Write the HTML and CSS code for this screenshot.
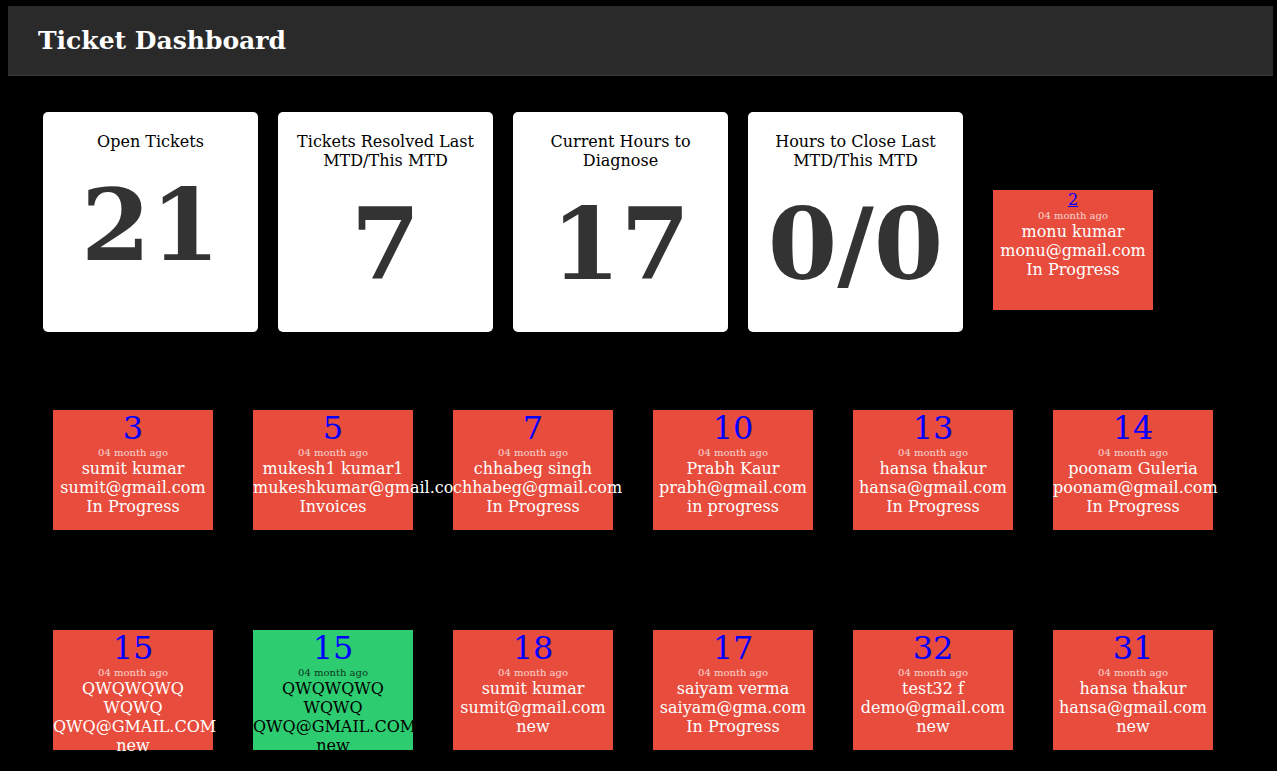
FILE: index.html
```html
<!DOCTYPE html>
<html>
<head>
<meta charset="utf-8">
<title>Ticket Dashboard</title>
<link rel="stylesheet" href="styles.css">
</head>
<body>
<header class="topbar"><h1 class="title">Ticket Dashboard</h1></header>
<main class="main">
  <div class="row row-first">
    <div class="stat"><div class="stat-title">Open Tickets</div><div class="stat-num">21</div></div>
    <div class="stat"><div class="stat-title">Tickets Resolved Last MTD/This MTD</div><div class="stat-num">7</div></div>
    <div class="stat"><div class="stat-title">Current Hours to Diagnose</div><div class="stat-num">17</div></div>
    <div class="stat"><div class="stat-title">Hours to Close Last MTD/This MTD</div><div class="stat-num">0/0</div></div>
    <div class="ticket red first-ticket"><a class="tnum small-link" href="#">2</a><div class="ago">04 month ago</div><div class="line">monu kumar</div><div class="line">monu@gmail.com</div><div class="line">In Progress</div></div>
  </div>
  <div class="row row-second">
    <div class="ticket red"><a class="tnum" href="#">3</a><div class="ago">04 month ago</div><div class="line">sumit kumar</div><div class="line">sumit@gmail.com</div><div class="line">In Progress</div></div>
    <div class="ticket red"><a class="tnum" href="#">5</a><div class="ago">04 month ago</div><div class="line">mukesh1 kumar1</div><div class="line">mukeshkumar@gmail.com</div><div class="line">Invoices</div></div>
    <div class="ticket red"><a class="tnum" href="#">7</a><div class="ago">04 month ago</div><div class="line">chhabeg singh</div><div class="line">chhabeg@gmail.com</div><div class="line">In Progress</div></div>
    <div class="ticket red"><a class="tnum" href="#">10</a><div class="ago">04 month ago</div><div class="line">Prabh Kaur</div><div class="line">prabh@gmail.com</div><div class="line">in progress</div></div>
    <div class="ticket red"><a class="tnum" href="#">13</a><div class="ago">04 month ago</div><div class="line">hansa thakur</div><div class="line">hansa@gmail.com</div><div class="line">In Progress</div></div>
    <div class="ticket red"><a class="tnum" href="#">14</a><div class="ago">04 month ago</div><div class="line">poonam Guleria</div><div class="line">poonam@gmail.com</div><div class="line">In Progress</div></div>
  </div>
  <div class="row row-third">
    <div class="ticket red"><a class="tnum" href="#">15</a><div class="ago">04 month ago</div><div class="line">QWQWQWQ WQWQ</div><div class="line">QWQ@GMAIL.COM</div><div class="line">new</div></div>
    <div class="ticket green"><a class="tnum" href="#">15</a><div class="ago">04 month ago</div><div class="line">QWQWQWQ WQWQ</div><div class="line">QWQ@GMAIL.COM</div><div class="line">new</div></div>
    <div class="ticket red"><a class="tnum" href="#">18</a><div class="ago">04 month ago</div><div class="line">sumit kumar</div><div class="line">sumit@gmail.com</div><div class="line">new</div></div>
    <div class="ticket red"><a class="tnum" href="#">17</a><div class="ago">04 month ago</div><div class="line">saiyam verma</div><div class="line">saiyam@gma.com</div><div class="line">In Progress</div></div>
    <div class="ticket red"><a class="tnum" href="#">32</a><div class="ago">04 month ago</div><div class="line">test32 f</div><div class="line">demo@gmail.com</div><div class="line">new</div></div>
    <div class="ticket red"><a class="tnum" href="#">31</a><div class="ago">04 month ago</div><div class="line">hansa thakur</div><div class="line">hansa@gmail.com</div><div class="line">new</div></div>
  </div>
</main>
</body>
</html>
```
FILE: styles.css
```css
html, body {
  background: #000;
}
body {
  margin: 6px 4px 0 8px;
  font-family: "DejaVu Serif", serif;
  font-size: 16px;
  color: #000;
  overflow: hidden;
}
.topbar {
  background: #2a2a2a;
  height: 69px;
  border-bottom: 1px solid #3a3a3a;
  padding: 0 30px;
  display: flex;
  align-items: center;
}
.title {
  margin: 0;
  color: #fff;
  font-size: 25px;
  font-weight: bold;
}
.main {
  padding: 26px 0 0 25px;
}
.row {
  display: flex;
  align-items: flex-start;
}
.row-second {
  margin-top: 48px;
}
.row-third {
  margin-top: 60px;
}
.stat {
  width: 215px;
  height: 220px;
  margin: 10px;
  background: #fff;
  border-radius: 5px;
  text-align: center;
  box-sizing: border-box;
  padding: 20px 10px 0;
}
.stat-title {
  font-size: 16px;
  line-height: 19px;
}
.stat-num {
  margin-top: 16px;
  font-size: 100px;
  font-weight: bold;
  color: #333;
  line-height: 116px;
}
.ticket {
  width: 160px;
  height: 120px;
  margin: 20px;
  text-align: center;
  color: #fff;
  font-size: 16px;
  line-height: 19px;
  flex-shrink: 0;
}
.first-ticket {
  margin-top: 88px;
}
.red {
  background: #e74c3c;
}
.green {
  background: #2ecc71;
  color: #000;
}
.tnum {
  display: block;
  color: #0000ff;
  text-decoration: none;
  font-size: 32px;
  line-height: 37px;
}
.small-link {
  font-size: 16px;
  line-height: 20px;
  text-decoration: underline;
}
.ago {
  font-size: 10px;
  line-height: 12px;
  opacity: 0.75;
}
.line {
  white-space: normal;
}
```
